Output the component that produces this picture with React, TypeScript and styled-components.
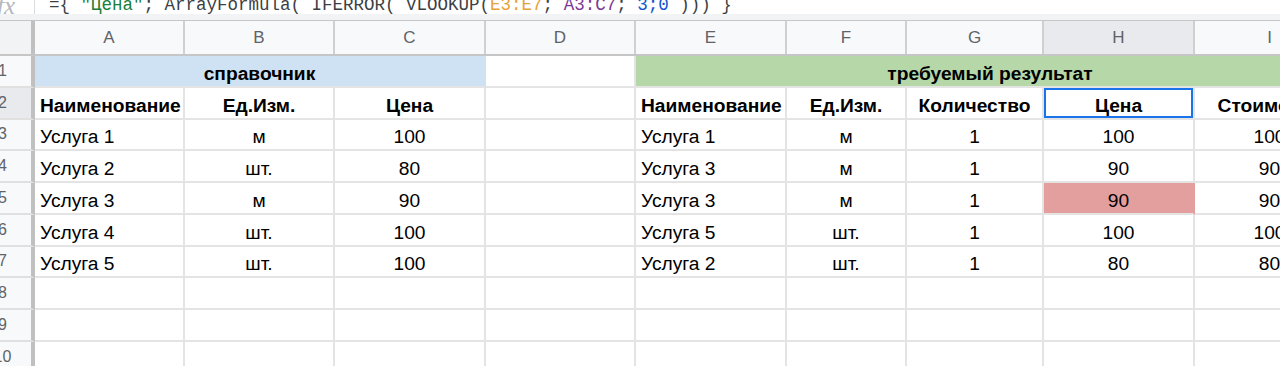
import React from 'react'
import styled, { createGlobalStyle } from 'styled-components'

// widths of the sheet columns A..J, as in the screenshot (scaled sheet)
const COLS = [
  { key: 'A', w: 150 },
  { key: 'B', w: 150 },
  { key: 'C', w: 151 },
  { key: 'D', w: 150 },
  { key: 'E', w: 151 },
  { key: 'F', w: 120 },
  { key: 'G', w: 137 },
  { key: 'H', w: 151 },
  { key: 'I', w: 151 },
  { key: 'J', w: 150 },
]
const ROW_HEAD = 63
const TEMPLATE = `${ROW_HEAD}px ${COLS.map((c) => c.w + 'px').join(' ')}`

type CellSpec = {
  text?: string
  span?: number
  align?: 'left' | 'center'
  bold?: boolean
  fill?: string
  selected?: boolean
}

const BLUE = '#cfe2f3'
const GREEN = '#b6d7a8'
const RED = '#e39f9d'

const L = (text: string, bold = false): CellSpec => ({ text, align: 'left', bold })
const C = (text: string, bold = false): CellSpec => ({ text, align: 'center', bold })

const ROWS: { n: number; active?: boolean; cells: CellSpec[] }[] = [
  {
    n: 1,
    cells: [
      { text: 'справочник', span: 3, align: 'center', bold: true, fill: BLUE },
      {},
      { text: 'требуемый результат', span: 5, align: 'center', bold: true, fill: GREEN },
      {},
    ],
  },
  {
    n: 2,
    active: true,
    cells: [
      L('Наименование', true), C('Ед.Изм.', true), C('Цена', true), {},
      L('Наименование', true), C('Ед.Изм.', true), C('Количество', true),
      { ...C('Цена', true), selected: true }, C('Стоимость', true), {},
    ],
  },
  { n: 3, cells: [L('Услуга 1'), C('м'), C('100'), {}, L('Услуга 1'), C('м'), C('1'), C('100'), C('100'), {}] },
  { n: 4, cells: [L('Услуга 2'), C('шт.'), C('80'), {}, L('Услуга 3'), C('м'), C('1'), C('90'), C('90'), {}] },
  { n: 5, cells: [L('Услуга 3'), C('м'), C('90'), {}, L('Услуга 3'), C('м'), C('1'), { ...C('90'), fill: RED }, C('90'), {}] },
  { n: 6, cells: [L('Услуга 4'), C('шт.'), C('100'), {}, L('Услуга 5'), C('шт.'), C('1'), C('100'), C('100'), {}] },
  { n: 7, cells: [L('Услуга 5'), C('шт.'), C('100'), {}, L('Услуга 2'), C('шт.'), C('1'), C('80'), C('80'), {}] },
  { n: 8, cells: [] },
  { n: 9, cells: [] },
  { n: 10, cells: [] },
]

const fillRow = (cells: CellSpec[]) => {
  const out = [...cells]
  let used = out.reduce((s, c) => s + (c.span || 1), 0)
  while (used < COLS.length) {
    out.push({})
    used++
  }
  return out
}

const App = () => {
  return (
    <Page>
      <GlobalStyle />
      <FormulaBar>
        <FxBox>fx</FxBox>
        <FormulaText>
          {'={ '}
          <Str>"Цена"</Str>
          {'; ArrayFormula( IFERROR( VLOOKUP('}
          <RefA>E3:E7</RefA>
          {'; '}
          <RefB>A3:C7</RefB>
          {'; '}
          <Num>3;0</Num>
          {' ))) }'}
        </FormulaText>
      </FormulaBar>
      <Band />
      <Sheet>
        <HeadRow>
          <Corner />
          {COLS.map((c) => (
            <ColHead key={c.key} active={c.key === 'H'}>
              {c.key}
            </ColHead>
          ))}
        </HeadRow>
        {ROWS.map((r) => (
          <Row key={r.n}>
            <RowHead active={r.active}>{r.n}</RowHead>
            {fillRow(r.cells).map((c, i) => (
              <Cell
                key={i}
                span={c.span || 1}
                align={c.align || 'left'}
                bold={c.bold}
                fill={c.fill}
                selected={c.selected}
              >
                {c.text}
              </Cell>
            ))}
          </Row>
        ))}
      </Sheet>
    </Page>
  )
}

export default App

//Styled Components
const GlobalStyle = createGlobalStyle`
  html, body {
    margin: 0;
    padding: 0;
    background: #ffffff;
    overflow: hidden;
  }
  body {
    font-family: "Liberation Sans", Arial, sans-serif;
  }
`
const Page = styled.div`
  width: 1280px;
  height: 366px;
  overflow: hidden;
  background: #fff;
`
const FormulaBar = styled.div`
  display: flex;
  align-items: flex-start;
  height: 14px;
  margin-left: -28px;
  overflow: hidden;
`
const FxBox = styled.div`
  width: ${ROW_HEAD}px;
  flex: none;
  box-sizing: border-box;
  height: 14px;
  border-right: 1px solid #dadce0;
  padding-right: 19px;
  text-align: right;
  font-family: "Liberation Serif", serif;
  font-style: italic;
  font-size: 25px;
  line-height: 12px;
  color: #b5b8bc;
`
const FormulaText = styled.div`
  padding-left: 14px;
  margin-top: -4px;
  font-family: "Liberation Mono", "DejaVu Sans Mono", monospace;
  font-size: 17.5px;
  line-height: 18px;
  color: #3c4043;
  white-space: pre;
`
const Str = styled.span`
  color: #188038;
`
const RefA = styled.span`
  color: #e8a13a;
`
const RefB = styled.span`
  color: #7e3794;
`
const Num = styled.span`
  color: #1155cc;
`
const Band = styled.div`
  height: 6px;
  background: #f1f3f4;
  border-bottom: 1px solid #c4c7c5;
`
const Sheet = styled.div`
  margin-left: -28px;
`
const HeadRow = styled.div`
  display: grid;
  grid-template-columns: ${TEMPLATE};
  height: 35px;
  box-sizing: border-box;
  border-bottom: 2px solid #c6c6c6;
  background: #f8f9fa;
`
const Corner = styled.div`
  background: #f1f3f4;
  border-right: 4px solid #c0c0c0;
`
const ColHead = styled.div<{ active?: boolean }>`
  display: flex;
  align-items: center;
  justify-content: center;
  background: ${(p) => (p.active ? '#e8eaed' : '#f8f9fa')};
  border-right: 2px solid #d0d0d0;
  color: #5f6368;
  font-size: 17px;
`
const Row = styled.div`
  display: grid;
  grid-template-columns: ${TEMPLATE};
  height: 31.75px;
`
const RowHead = styled.div<{ active?: boolean }>`
  display: flex;
  align-items: center;
  justify-content: center;
  box-sizing: border-box;
  padding-left: 2px;
  background: ${(p) => (p.active ? '#e8eaed' : '#f8f9fa')};
  border-right: 4px solid #c0c0c0;
  border-bottom: 2px solid #e0e0e0;
  color: #5f6368;
  font-size: 16px;
`
const Cell = styled.div<{
  span: number
  align: 'left' | 'center'
  bold?: boolean
  fill?: string
  selected?: boolean
}>`
  grid-column: span ${(p) => p.span};
  display: flex;
  align-items: flex-end;
  justify-content: ${(p) => (p.align === 'center' ? 'center' : 'flex-start')};
  box-sizing: border-box;
  padding: 0 5px 2px 5px;
  background: ${(p) => p.fill || '#fff'};
  border-right: 2px solid ${(p) => (p.fill ? 'transparent' : '#e4e4e4')};
  border-bottom: 2px solid #e4e4e4;
  box-shadow: ${(p) => (p.selected ? 'inset 0 0 0 2px #1a73e8' : 'none')};
  font-size: 19.2px;
  line-height: 20px;
  font-weight: ${(p) => (p.bold ? 700 : 400)};
  color: #000;
  white-space: nowrap;
  overflow: hidden;
`
